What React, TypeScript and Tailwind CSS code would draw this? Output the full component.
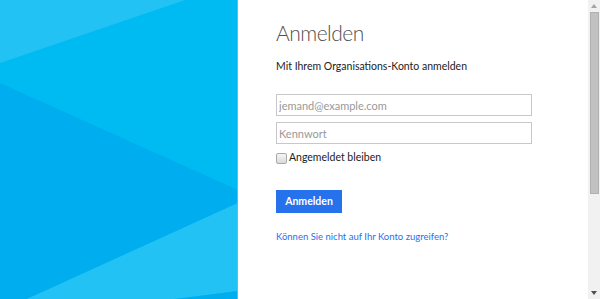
import React from 'react';

const Background: React.FC = () => (
  <svg width="238" height="299" viewBox="0 0 238 299" className="block shrink-0">
    <rect width="238" height="299" fill="#00bbf2" />
    <polygon points="0,0 185,0 0,63" fill="#22c3f4" />
    <polygon points="0,83 238,190 238,203 27,299 0,299" fill="#00aeef" />
    <polygon points="27,299 238,203 238,291 175,299" fill="#22c3f4" />
    <polygon points="175,299 238,291 238,299" fill="#00aeef" />
    <rect x="237" y="0" width="1" height="299" fill="#3ccbf5" />
  </svg>
);

const Scrollbar: React.FC = () => (
  <div className="w-[12px] h-full bg-[#f1f1f1] flex flex-col items-center shrink-0">
    <div className="h-[12px] flex items-center justify-center">
      <svg width="6" height="4" viewBox="0 0 6 4">
        <polygon points="3,0 6,4 0,4" fill="#a3a3a3" />
      </svg>
    </div>
    <div className="w-[9px] h-[182px] bg-[#c1c1c1] border border-[#b0b0b0]" />
    <div className="flex-1" />
    <div className="h-[12px] flex items-center justify-center">
      <svg width="6" height="4" viewBox="0 0 6 4">
        <polygon points="0,0 6,0 3,4" fill="#505050" />
      </svg>
    </div>
  </div>
);

const App: React.FC = () => {
  return (
    <div className="flex w-[600px] h-[299px] overflow-hidden bg-white font-['Lato',sans-serif]">
      <Background />
      <div className="flex-1 pl-[38px] pt-[20px]">
        <h1 className="text-[21px] leading-[26px] font-light tracking-[-0.5px] text-[#505050]">Anmelden</h1>
        <p className="mt-[12px] text-[10.5px] leading-[16px] text-[#222]">
          Mit Ihrem Organisations-Konto anmelden
        </p>
        <div className="mt-[20px] flex flex-col gap-[6px] w-[256px]">
          <input
            type="text"
            placeholder="jemand@example.com"
            className="h-[22px] border border-[#c8c8c8] px-[2px] text-[11px] placeholder:text-[#999] outline-none"
          />
          <input
            type="password"
            placeholder="Kennwort"
            className="h-[22px] border border-[#c8c8c8] px-[2px] text-[11px] placeholder:text-[#999] outline-none"
          />
        </div>
        <label className="mt-[6px] h-[16px] flex items-center gap-[2px] text-[10.5px] text-[#222]">
          <input
            type="checkbox"
            className="appearance-none w-[11px] h-[11px] m-0 border border-[#a9a9a9] rounded-[2px] bg-gradient-to-b from-[#f6f6f6] to-[#dadada]"
          />
          Angemeldet bleiben
        </label>
        <button className="mt-[24px] w-[66px] h-[23px] bg-[#2672ec] text-white text-[10.5px] font-bold">
          Anmelden
        </button>
        <a href="#" className="block mt-[17px] text-[9.5px] leading-[14px] text-[#2672ec]">
          Können Sie nicht auf Ihr Konto zugreifen?
        </a>
      </div>
      <Scrollbar />
    </div>
  );
};

export default App;
